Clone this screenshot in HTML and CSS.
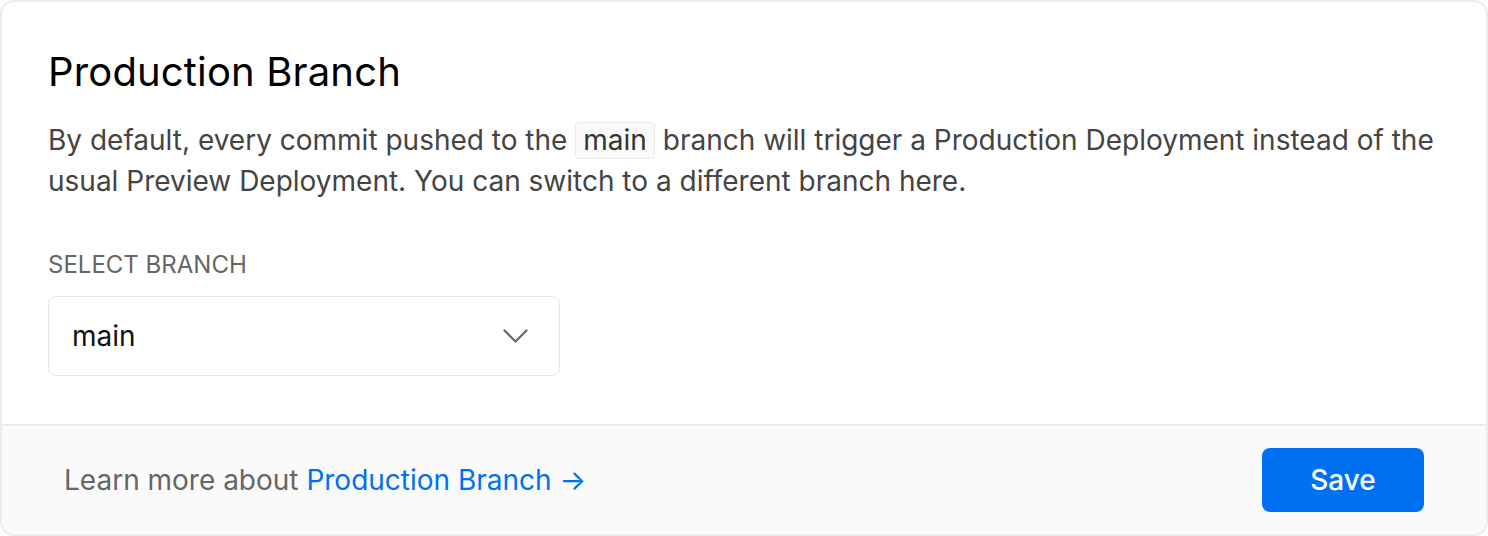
FILE: index.html
```html
<!DOCTYPE html>
<html>
<head>
<meta charset="utf-8">
<link rel="stylesheet" href="styles.css">
</head>
<body>
<div class="card">
  <div class="content">
    <h1 class="title">Production Branch</h1>
    <p class="desc">By default, every commit pushed to the <code class="chip">main</code> branch will trigger a Production Deployment instead of the usual Preview Deployment. You can switch to a different branch here.</p>
    <div class="label">SELECT BRANCH</div>
    <div class="select">
      <span class="select-value">main</span>
      <svg class="chev" width="25" height="15" viewBox="0 0 25 15" fill="none" stroke="#666" stroke-width="2.2" stroke-linecap="round" stroke-linejoin="round"><path d="M1.5 1.5l11 11 11-11"/></svg>
    </div>
  </div>
  <div class="footer">
    <div class="learn">Learn more about <a class="link" href="#">Production Branch →</a></div>
    <button class="save">Save</button>
  </div>
</div>
</body>
</html>
```
FILE: styles.css
```css
html, body { margin: 0; padding: 0; background: #fff; }
body { font-family: Inter, "Noto Sans", sans-serif; color: #000; }
.card {
  margin: 0;
  height: 536px;
  box-sizing: border-box;
  border: 2px solid #ececec;
  border-radius: 14px;
  overflow: hidden;
  display: flex;
  flex-direction: column;
}
.content { flex: 1; padding: 46px 46px 0; }
.title { margin: 0; font-size: 40px; font-weight: 400; line-height: 48px; letter-spacing: 0.15px; }
.desc { margin: 24px 0 0; font-size: 28px; line-height: 41px; color: #444; }
.chip {
  display: inline-block;
  font-family: Inter, sans-serif; font-size: 28px; line-height: 35px;
  background: #fafafa; border: 1px solid #eaeaea; border-radius: 4px;
  padding: 0 7px; color: #333;
}
.label { margin-top: 48px; font-size: 24px; color: #666; line-height: 30px; }
.select {
  margin-top: 16px; width: 512px; height: 80px; box-sizing: border-box;
  border: 1px solid #e6e6e6; border-radius: 8px;
  display: flex; align-items: center; justify-content: space-between;
  padding: 0 31px 0 23px;
}
.select-value { font-size: 28px; color: #111; }
.footer {
  height: 110px; box-sizing: border-box;
  border-top: 2px solid #ececec; background: #fafafa;
  display: flex; align-items: center; justify-content: space-between;
  padding: 0 62px;
}
.learn { font-size: 28px; color: #666; }
.link { color: #0070f3; text-decoration: none; }
.save {
  width: 162px; height: 64px; border: 0; border-radius: 8px;
  background: #0070f3; color: #fff; font-family: Inter, sans-serif;
  font-size: 28px; font-weight: 500;
}
```
